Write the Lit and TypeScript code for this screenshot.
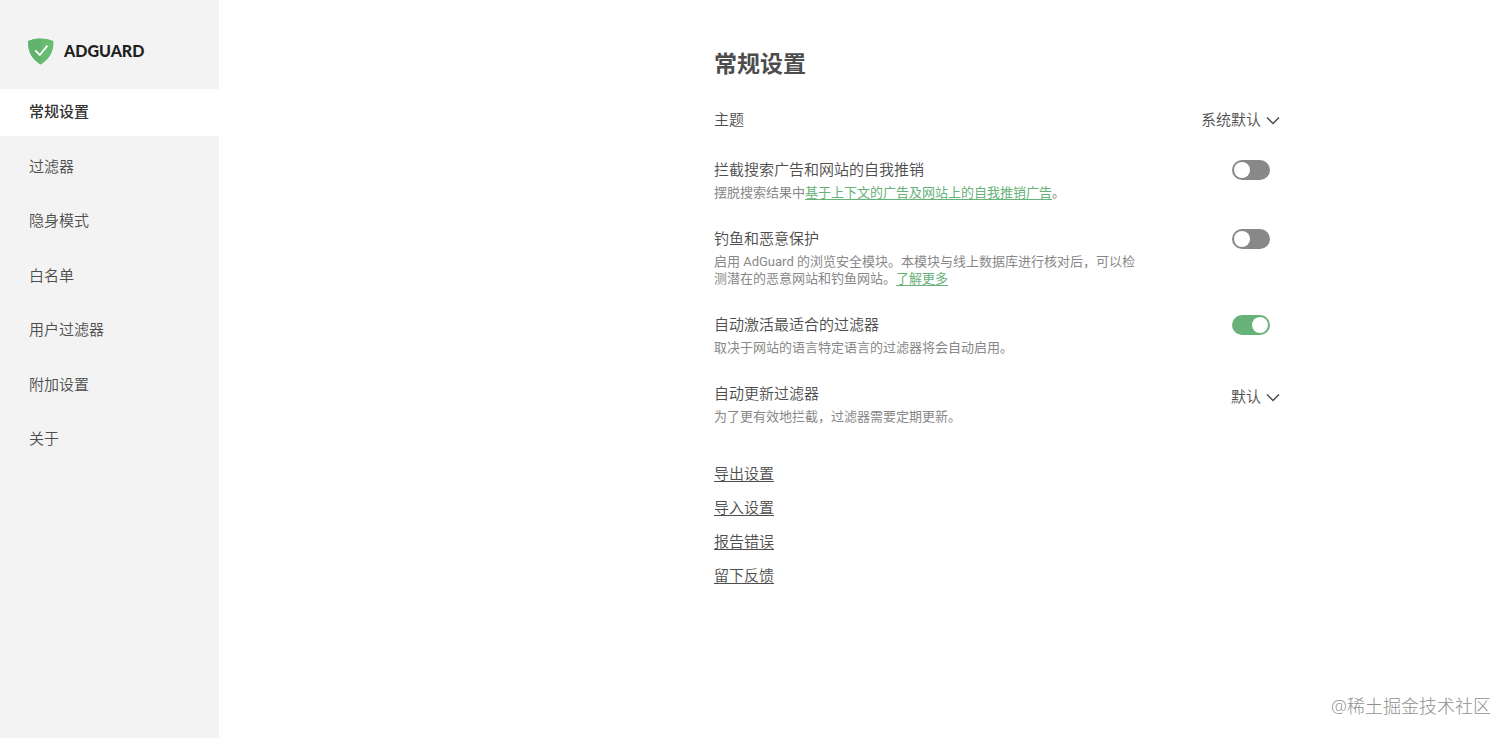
import { LitElement, html, css, svg } from "lit";
import { customElement, property, state } from "lit/decorators.js";
import { classMap } from "lit/directives/class-map.js";

const chevron = svg`<path d="M1 1.5 L7 7.5 L13 1.5" fill="none" stroke="#4d4d4d" stroke-width="1.5"/>`;

@customElement("side-bar")
export class SideBar extends LitElement {
  static styles = css`
    :host {
      display: block;
      background: #f3f3f3;
    }
    .logo {
      display: flex;
      align-items: center;
      gap: 10px;
      height: 89px;
      padding: 13px 27px 0;
      box-sizing: border-box;
      text-decoration: none;
      font: 900 16px/24px Lato, sans-serif;
      color: #1f1f1f;
    }
    .shield {
      width: 27px;
      height: 27px;
    }
    .nav {
      display: flex;
      flex-direction: column;
      justify-content: space-between;
      height: 374px;
    }
    .item {
      padding: 12px 29px;
      font-size: 15px;
      line-height: 23px;
      color: #4d4d4d;
      text-decoration: none;
    }
    .active {
      background: #fff;
      color: #333;
      font-weight: 500;
    }
  `;

  @property() active = "";

  private items = ["常规设置", "过滤器", "隐身模式", "白名单", "用户过滤器", "附加设置", "关于"];

  render() {
    return html`
      <a class="logo" href="#home">
        <svg class="shield" viewBox="0 0 27 27" aria-hidden="true">
          <path d="M13.8 0.5 C9.8 0.5 4.9 1.2 1.2 3.1 C1.2 7.8 0.6 18.5 13.8 26.6 C27 18.5 26.4 7.8 26.4 3.1 C22.7 1.2 17.8 0.5 13.8 0.5Z" fill="#68bc71"/>
          <path d="M13.8 0.5 C9.8 0.5 4.9 1.2 1.2 3.1 C1.2 7.8 0.6 18.5 13.8 26.6Z" fill="#60b26c"/>
          <path d="M8.2 12.3 L12.8 17 L20.4 7.6" fill="none" stroke="#fff" stroke-width="1.8"/>
        </svg>
        <span>ADGUARD</span>
      </a>
      <nav class="nav">
        ${this.items.map(
          (name) => html`<a
            href="#${name}"
            class=${classMap({ item: true, active: name === this.active })}
            >${name}</a
          >`
        )}
      </nav>
    `;
  }
}

@customElement("app-root")
export class AppRoot extends LitElement {
  static styles = css`
    :host {
      display: grid;
      grid-template-columns: 219px 1fr;
      min-height: 100vh;
      font-family: Roboto, "Noto Sans CJK SC", sans-serif;
      font-weight: 350;
      color: #4d4d4d;
      background: #fff;
    }
    .main {
      display: grid;
      grid-template-columns: 32fr minmax(0, 566px) 15fr;
      grid-template-rows: 1fr auto;
    }
    .content {
      grid-column: 2;
      padding-top: 49px;
    }
    .title {
      margin: 0 0 27px;
      font-size: 23px;
      line-height: 32px;
      font-weight: 700;
    }
    .rows {
      display: flex;
      flex-direction: column;
      gap: 27px;
    }
    .row {
      display: flex;
      justify-content: space-between;
      align-items: flex-start;
    }
    .simple {
      align-items: center;
    }
    .text {
      max-width: 430px;
    }
    .label {
      display: block;
      font-size: 15px;
      line-height: 22px;
    }
    .desc {
      margin: 3px 0 0;
      font-size: 13px;
      line-height: 17px;
      font-weight: 400;
      color: #888;
    }
    .link {
      color: #67b279;
      text-underline-offset: 2px;
    }
    .picker {
      display: inline-grid;
      align-items: center;
      justify-items: end;
      height: 28px;
    }
    .simple .picker {
      height: 24px;
    }
    .select,
    .arrow {
      grid-area: 1 / 1;
    }
    .select {
      appearance: none;
      border: 0;
      margin: 0;
      padding: 0 19px 0 0;
      background: none;
      font: inherit;
      font-size: 15px;
      line-height: 22px;
      color: inherit;
      text-align-last: right;
    }
    .arrow {
      width: 14px;
      height: 9px;
      pointer-events: none;
    }
    .toggle {
      appearance: none;
      display: flex;
      width: 38px;
      height: 20px;
      margin: 1px 10px 0 0;
      padding: 1px;
      box-sizing: border-box;
      border-radius: 10px;
      background: #888;
    }
    .toggle::before {
      content: "";
      width: 16px;
      height: 16px;
      margin: 1px;
      border-radius: 50%;
      background: #fff;
    }
    .toggle:checked {
      justify-content: flex-end;
      background: #67b279;
    }
    .actions {
      display: flex;
      flex-direction: column;
      align-items: flex-start;
      gap: 12px;
      margin-top: 38px;
    }
    .action {
      font-size: 15px;
      line-height: 22px;
      color: inherit;
      text-underline-offset: 2px;
    }
    .credit {
      grid-column: 1 / -1;
      justify-self: end;
      margin: 0;
      padding: 0 21px 19px;
      font-family: "Open Sans", "Noto Sans CJK SC", sans-serif;
      font-size: 18px;
      line-height: 26px;
      color: #909090;
      font-weight: 300;
    }
  `;

  @state() private flags: Record<string, boolean> = { ads: false, phishing: false, auto: true };

  private toggle(id: string) {
    return html`<input
      class="toggle"
      type="checkbox"
      role="switch"
      id=${id}
      .checked=${this.flags[id]}
      @change=${(e: Event) =>
        (this.flags = { ...this.flags, [id]: (e.target as HTMLInputElement).checked })}
    />`;
  }

  private picker(id: string, options: string[]) {
    return html`<span class="picker">
      <select class="select" id=${id}>
        ${options.map((o) => html`<option>${o}</option>`)}
      </select>
      <svg class="arrow" viewBox="0 0 14 9" aria-hidden="true">${chevron}</svg>
    </span>`;
  }

  private row(id: string, label: string, desc: unknown, control: unknown) {
    return html`<div class="row">
      <div class="text">
        <label class="label" for=${id}>${label}</label>
        <p class="desc">${desc}</p>
      </div>
      ${control}
    </div>`;
  }

  render() {
    return html`
      <side-bar active="常规设置"></side-bar>
      <main class="main" lang="zh-CN">
        <section class="content">
          <h1 class="title">常规设置</h1>
          <div class="rows">
            <div class="row simple">
              <label class="label" for="theme">主题</label>
              ${this.picker("theme", ["系统默认", "浅色", "深色"])}
            </div>
            ${this.row(
              "ads",
              "拦截搜索广告和网站的自我推销",
              html`摆脱搜索结果中<a class="link" href="#ads">基于上下文的广告及网站上的自我推销广告</a>。`,
              this.toggle("ads")
            )}
            ${this.row(
              "phishing",
              "钓鱼和恶意保护",
              html`启用 AdGuard 的浏览安全模块。本模块与线上数据库进行核对后，可以检测潜在的恶意网站和钓鱼网站。<a class="link" href="#more">了解更多</a>`,
              this.toggle("phishing")
            )}
            ${this.row(
              "auto",
              "自动激活最适合的过滤器",
              "取决于网站的语言特定语言的过滤器将会自动启用。",
              this.toggle("auto")
            )}
            ${this.row(
              "update",
              "自动更新过滤器",
              "为了更有效地拦截，过滤器需要定期更新。",
              this.picker("update", ["默认", "禁用"])
            )}
          </div>
          <div class="actions">
            ${["导出设置", "导入设置", "报告错误", "留下反馈"].map(
              (name) => html`<a class="action" href="#${name}">${name}</a>`
            )}
          </div>
        </section>
        <p class="credit">@稀土掘金技术社区</p>
      </main>
    `;
  }
}
